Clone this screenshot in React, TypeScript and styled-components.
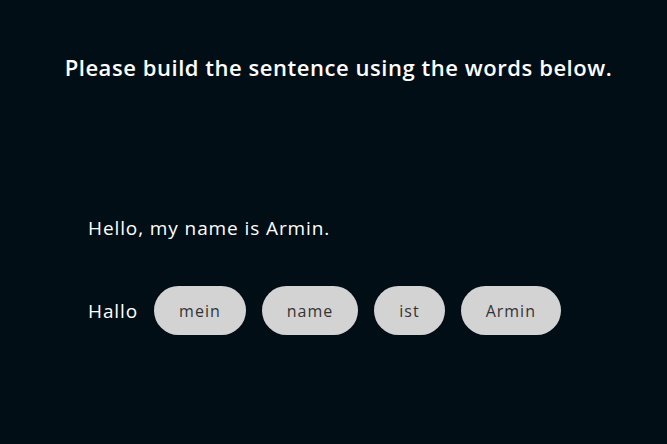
import React from 'react';
import styled, { createGlobalStyle } from 'styled-components';

const GlobalStyle = createGlobalStyle`
  html, body {
    margin: 0;
    padding: 0;
    background: #010e16;
  }
  body {
    font-family: 'Open Sans', 'DejaVu Sans', sans-serif;
    color: #ffffff;
  }
`;

const Page = styled.main`
  width: 667px;
  height: 444px;
  box-sizing: border-box;
  padding: 51px 0 0 10px;
  display: flex;
  flex-direction: column;
`;

const Heading = styled.h1`
  margin: 0;
  text-align: center;
  font-size: 22px;
  font-weight: 600;
  line-height: 32px;
  letter-spacing: 0.55px;
`;

const Exercise = styled.section`
  margin-top: 133px;
  padding: 0 78px;
  display: flex;
  flex-direction: column;
  gap: 46px;
`;

const Prompt = styled.p`
  margin: 0;
  font-size: 19px;
  font-weight: 400;
  line-height: 24px;
  letter-spacing: 0.9px;
`;

const WordRow = styled.div`
  display: flex;
  align-items: center;
  gap: 16px;
`;

const FixedWord = styled.span`
  font-size: 19px;
  font-weight: 400;
  letter-spacing: 0.9px;
`;

const WordChip = styled.button`
  height: 49px;
  padding: 0 25px;
  border: none;
  border-radius: 25px;
  background: #d3d3d3;
  color: #333333;
  font-family: inherit;
  font-size: 16px;
  font-weight: 400;
  letter-spacing: 1px;
  cursor: pointer;
`;

const words = ['mein', 'name', 'ist', 'Armin'];

const App: React.FC = () => (
  <>
    <GlobalStyle />
    <Page>
      <Heading>Please build the sentence using the words below.</Heading>
      <Exercise>
        <Prompt>Hello, my name is Armin.</Prompt>
        <WordRow>
          <FixedWord>Hallo</FixedWord>
          {words.map((word) => (
            <WordChip key={word}>{word}</WordChip>
          ))}
        </WordRow>
      </Exercise>
    </Page>
  </>
);

export default App;
